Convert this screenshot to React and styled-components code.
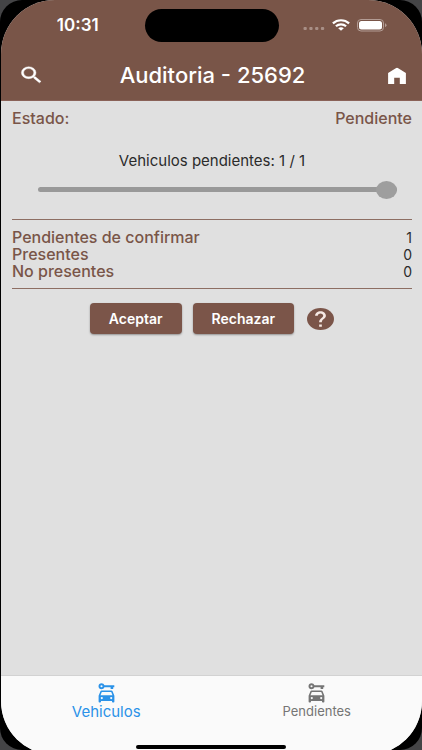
import React, { useState } from 'react'
import styled, { createGlobalStyle, ThemeProvider } from 'styled-components'

const theme = {
  primary: '#795548',
  primaryDark: '#7b5549',
  bg: '#e0e0e0',
  bar: '#fafafa',
  text: '#2b2b2b',
  disabled: '#999999',
  active: '#2b92e8',
  inactive: '#757575',
}

const GlobalStyle = createGlobalStyle`
  * {
    box-sizing: border-box;
  }
  body {
    margin: 0;
    background-color: #444446;
    font-family: Inter, "Liberation Sans", sans-serif;
    color: ${theme.text};
  }
`

const Device = styled.div`
  display: flex;
  height: 100vh;
  padding: 0 0 0 1px;
  overflow: hidden;
  background-color: #000;
  border-radius: 22px;
`
const Screen = styled.div`
  display: flex;
  flex: 1;
  flex-direction: column;
  margin-bottom: -5px;
  overflow: hidden;
  background-color: ${({ theme }) => theme.bg};
  border-radius: 54px;
`
const Header = styled.header`
  background-color: ${({ theme }) => theme.primary};
  color: #fff;
  border-bottom: 1px solid #8a6258;
`
const StatusBar = styled.div`
  display: grid;
  grid-template-columns: 1fr 134px 1fr;
  align-items: center;
  height: 50px;
`
const Time = styled.time`
  justify-self: center;
  padding-left: 10px;
  font-size: 17px;
  font-weight: 600;
`
const Island = styled.div`
  height: 33px;
  border-radius: 17px;
  background-color: #000;
`
const Signals = styled.div`
  display: flex;
  align-items: center;
  justify-content: flex-end;
  gap: 7px;
  padding-right: 35px;
`
const AppBar = styled.div`
  display: flex;
  align-items: center;
  justify-content: space-between;
  height: 50px;
  padding: 0 12px 0 17px;
`
const Title = styled.h1`
  margin: 0;
  padding-right: 4px;
  font-size: 22px;
  font-weight: 500;
`
const IconButton = styled.button`
  display: flex;
  padding: 0;
  border: 0;
  background: none;
  color: inherit;
  cursor: pointer;
`
const Main = styled.main`
  flex: 1;
  padding: 9px 10px 0 11px;
`
const Row = styled.div`
  display: flex;
  justify-content: space-between;
  line-height: 17px;
`
const Label = styled.span`
  color: ${({ theme }) => theme.primary};
  font-size: 16px;
  font-weight: 500;
`
const SliderBox = styled.div`
  display: flex;
  flex-direction: column;
  align-items: center;
  gap: 10px;
  padding: 26px 15px 20px 26px;
`
const SliderLabel = styled.label`
  padding-right: 11px;
  font-size: 15px;
  line-height: 16px;
`
const Slider = styled.input`
  width: 100%;
  height: 20px;
  margin: 0;
  appearance: none;
  background: none;

  &::-webkit-slider-runnable-track {
    height: 5px;
    border-radius: 3px;
    background-color: ${({ theme }) => theme.disabled};
  }
  &::-webkit-slider-thumb {
    appearance: none;
    width: 21px;
    height: 18px;
    margin-top: -6px;
    border-radius: 50%;
    background-color: #9e9e9e;
  }
`
const Stats = styled.dl`
  margin: 0;
  padding: 9px 0 8px;
  border: solid #8d6e63;
  border-width: 1px 0;
`
const StatName = styled.dt`
  color: ${({ theme }) => theme.primary};
  font-size: 16px;
  font-weight: 500;
`
const StatValue = styled.dd`
  margin: 0;
  font-size: 14px;
`
const Actions = styled.div`
  display: flex;
  align-items: center;
  justify-content: center;
  gap: 11px;
  padding-top: 14px;
`
const Button = styled.button`
  height: 31px;
  padding: 0 19px;
  border: 0;
  border-radius: 4px;
  background-color: ${({ theme }) => theme.primaryDark};
  box-shadow: 0 1px 2px rgba(0, 0, 0, 0.35);
  color: #fff;
  font-family: inherit;
  font-size: 14px;
  font-weight: 600;
  cursor: pointer;
`
const HelpButton = styled(IconButton)`
  margin-left: 2px;
  color: ${({ theme }) => theme.primaryDark};
`
const TabBar = styled.nav`
  display: flex;
  height: 80px;
  border-top: 1px solid #d2d2d2;
  background-color: ${({ theme }) => theme.bar};
`
const Tab = styled.button`
  display: flex;
  flex: 1;
  flex-direction: column;
  align-items: center;
  padding: 7px 0 0;
  border: 0;
  background: none;
  color: ${({ theme, $active }) => ($active ? theme.active : theme.inactive)};
  font-family: inherit;
  font-size: ${({ $active }) => ($active ? '15px' : '13px')};
  line-height: 17px;
  cursor: pointer;
`
const HomeIndicator = styled.div`
  position: fixed;
  bottom: 1px;
  left: 50%;
  width: 150px;
  height: 4px;
  border-radius: 2px;
  background-color: #000;
  transform: translateX(-50%);
`

const SearchIcon = () => (
  <svg width="27" height="22" viewBox="0 0 24 24" preserveAspectRatio="none" fill="currentColor">
    <path
      stroke="currentColor"
      strokeWidth=".4"
      d="M15.5 14h-.79l-.28-.27A6.47 6.47 0 0 0 16 9.5 6.5 6.5 0 1 0 9.5 16c1.61 0 3.09-.59 4.23-1.57l.27.28v.79l5 4.99L20.49 19l-4.99-5zm-6 0C7.01 14 5 11.99 5 9.5S7.01 5 9.5 5 14 7.01 14 9.5 11.99 14 9.5 14z"
    />
  </svg>
)

const HomeIcon = () => (
  <svg width="26" height="22" viewBox="0 0 26 22" fill="currentColor">
    <path d="M4.100 9 11.800 4.200Q13 3.400 14.200 4.200L21.900 9V20H15.800V13.800H10.200V20H4.100Z" />
  </svg>
)

const HelpIcon = () => (
  <svg width="27" height="22" viewBox="2 2 20 20" preserveAspectRatio="none">
    <circle cx="12" cy="12" r="10" fill="currentColor" />
    <path
      fill="#f6e9e4"
      d="M13 19h-2v-2h2v2zm2.070-7.750-.9.920C13.450 12.900 13 13.500 13 15h-2v-.5c0-1.100.45-2.100 1.170-2.830l1.240-1.260c.37-.36.59-.86.59-1.410 0-1.100-.9-2-2-2s-2 .9-2 2H8c0-2.210 1.790-4 4-4s4 1.790 4 4c0 .88-.36 1.680-.93 2.250z"
    />
  </svg>
)

const CarKeyIcon = () => (
  <svg width="17" height="20" viewBox="0 0 17 20" fill="currentColor">
    <path
      fillRule="evenodd"
      d="M3.500.3C5 .3 6 1.100 6.400 2.200H16.300V4.300H15.200V6H12.600V4.300H6.400C6 5.500 5 6.200 3.500 6.200 1.800 6.200.5 5 .5 3.250S1.800.3 3.500.3ZM3.500 2.200A1.050 1.050 0 1 0 3.500 4.300 1.050 1.050 0 1 0 3.500 2.200Z"
    />
    <path
      fillRule="evenodd"
      d="M3.600 7.600H13.400Q14.300 7.600 14.600 8.300L16.400 12.800V18.600Q16.400 19.500 15.500 19.500H14.800Q14 19.500 14 18.600V17.900H3V18.600Q3 19.500 2.200 19.500H1.500Q.6 19.500.6 18.600V12.800L2.400 8.300Q2.700 7.600 3.600 7.600ZM3.800 9 2.500 12.200H14.500L13.200 9ZM3.800 14A1.100 1.100 0 1 0 3.800 16.200 1.100 1.100 0 1 0 3.800 14ZM13.200 14A1.100 1.100 0 1 0 13.200 16.200 1.100 1.100 0 1 0 13.200 14Z"
    />
  </svg>
)

const CellularIcon = () => (
  <svg width="22" height="12" viewBox="0 0 22 12" fill="#a88f86">
    <rect x=".5" y="8" width="3.300" height="3" rx="1" />
    <rect x="6.300" y="8" width="3.300" height="3" rx="1" />
    <rect x="12.100" y="8" width="3.300" height="3" rx="1" />
    <rect x="17.900" y="8" width="3.300" height="3" rx="1" />
  </svg>
)

const WifiIcon = () => (
  <svg width="18" height="12" viewBox="0 0 18 12" fill="none" stroke="#fff" strokeWidth="2.200">
    <path d="M.9 4.400C5.400.2 12.600.2 17.100 4.400" />
    <path d="M3.900 7.300C6.800 4.700 11.200 4.700 14.100 7.300" />
    <path fill="#fff" stroke="none" d="M6.200 9.200C7.700 7.800 10.300 7.800 11.800 9.200L9 11.800Z" />
  </svg>
)

const BatteryIcon = () => (
  <svg width="30" height="13" viewBox="0 0 30 13">
    <rect x=".5" y=".5" width="26" height="11.500" rx="3.500" fill="none" stroke="#b39c94" />
    <rect x="2" y="2" width="23" height="8.500" rx="2.500" fill="#fff" />
    <path d="M28 4.300Q29.500 5 29.500 6.250T28 8.200Z" fill="#b39c94" />
  </svg>
)

const stats = [
  { name: 'Pendientes de confirmar', value: 1 },
  { name: 'Presentes', value: 0 },
  { name: 'No presentes', value: 0 },
]

const tabs = ['Vehiculos', 'Pendientes']

const App = () => {
  const [tab, setTab] = useState('Vehiculos')

  return (
    <ThemeProvider theme={theme}>
      <GlobalStyle />
      <Device>
        <Screen>
          <Header>
            <StatusBar>
              <Time>10:31</Time>
              <Island />
              <Signals>
                <CellularIcon />
                <WifiIcon />
                <BatteryIcon />
              </Signals>
            </StatusBar>
            <AppBar>
              <IconButton aria-label="Buscar">
                <SearchIcon />
              </IconButton>
              <Title>Auditoria - 25692</Title>
              <IconButton aria-label="Inicio">
                <HomeIcon />
              </IconButton>
            </AppBar>
          </Header>
          <Main>
            <Row>
              <Label>Estado:</Label>
              <Label>Pendiente</Label>
            </Row>
            <SliderBox>
              <SliderLabel htmlFor="vehiculos">Vehiculos pendientes: 1 / 1</SliderLabel>
              <Slider id="vehiculos" type="range" min="0" max="1" defaultValue="1" disabled />
            </SliderBox>
            <Stats>
              {stats.map(({ name, value }) => (
                <Row key={name}>
                  <StatName>{name}</StatName>
                  <StatValue>{value}</StatValue>
                </Row>
              ))}
            </Stats>
            <Actions>
              <Button>Aceptar</Button>
              <Button>Rechazar</Button>
              <HelpButton aria-label="Ayuda">
                <HelpIcon />
              </HelpButton>
            </Actions>
          </Main>
          <TabBar>
            {tabs.map((name) => (
              <Tab key={name} $active={tab === name} onClick={() => setTab(name)}>
                <CarKeyIcon />
                {name}
              </Tab>
            ))}
          </TabBar>
        </Screen>
        <HomeIndicator />
      </Device>
    </ThemeProvider>
  )
}

export default App
